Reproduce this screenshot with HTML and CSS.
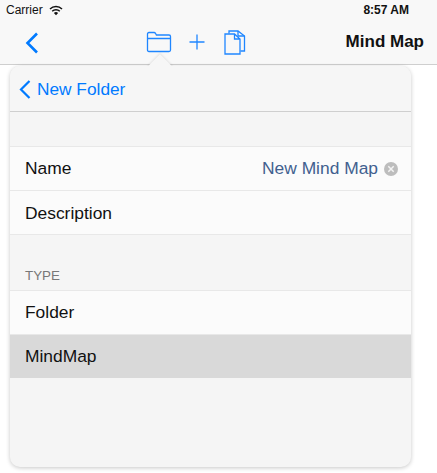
FILE: index.html
```html
<!DOCTYPE html>
<html>
<head>
    <title>Mind Map</title>
    <link rel="stylesheet" href="styles.css">
</head>
<body>
    <div class="topbar">
        <div class="status">
            <div class="carrier">
                Carrier
                <svg class="wifi" width="14" height="11" viewBox="0 0 14 11">
                    <path d="M1 4 A8.5 8.5 0 0 1 13 4" fill="none" stroke="#111" stroke-width="1.5"/>
                    <path d="M3.2 6.2 A5.4 5.4 0 0 1 10.8 6.2" fill="none" stroke="#111" stroke-width="1.5"/>
                    <path d="M7 10.2 L4.9 8 A3 3 0 0 1 9.1 8 Z" fill="#111"/>
                </svg>
            </div>
            <div class="clock">8:57 AM</div>
        </div>
        <div class="toolbar">
            <svg class="back" width="14" height="22" viewBox="0 0 14 22">
                <path d="M12 1.5 L2.5 11 L12 20.5" fill="none" stroke="#007aff" stroke-width="2.6"/>
            </svg>
            <div class="tools">
                <svg width="26" height="22" viewBox="0 0 26 22">
                    <path d="M1.5 19 V3 Q1.5 1.5 3 1.5 H8 Q9 1.5 9.6 2.5 L10.4 4 H23 Q24.5 4 24.5 5.5 V19 Q24.5 20.5 23 20.5 H3 Q1.5 20.5 1.5 19 Z M1.5 7.5 H24.5" fill="none" stroke="#1f86ff" stroke-width="1.3"/>
                </svg>
                <svg width="16" height="16" viewBox="0 0 16 16">
                    <path d="M8 .5 V15.5 M.5 8 H15.5" fill="none" stroke="#1f86ff" stroke-width="1.3"/>
                </svg>
                <svg class="copy" width="22" height="25" viewBox="0 0 22 25">
                    <path d="M5 3.5 V1 H14 L20.5 6 V21 H16.5" fill="none" stroke="#1f86ff" stroke-width="1.3"/>
                    <path d="M14 1 V6 H20.5" fill="none" stroke="#1f86ff" stroke-width="1.3"/>
                    <path d="M1 24 V4 H10.5 L16 9 V24 Z M10.5 4 V9 H16" fill="none" stroke="#1f86ff" stroke-width="1.3"/>
                </svg>
            </div>
            <div class="title">Mind Map</div>
        </div>
    </div>

    <div class="popover">
        <div class="arrow"></div>
        <div class="pop-nav">
            <svg width="12" height="19" viewBox="0 0 12 19">
                <path d="M10.5 1 L2 9.5 L10.5 18" fill="none" stroke="#007aff" stroke-width="2.2"/>
            </svg>
            New Folder
        </div>
        <div class="group first">
            <div class="row">
                <span>Name</span>
                <span class="value">New Mind Map</span>
                <svg class="clear" width="14" height="14" viewBox="0 0 14 14">
                    <circle cx="7" cy="7" r="7" fill="#bdbdbd"/>
                    <path d="M4.3 4.3 L9.7 9.7 M9.7 4.3 L4.3 9.7" stroke="#f4f4f4" stroke-width="1.5"/>
                </svg>
            </div>
            <div class="row low">Description</div>
        </div>
        <div class="group-label">TYPE</div>
        <div class="group">
            <div class="row">Folder</div>
            <div class="row selected">MindMap</div>
        </div>
    </div>
</body>
</html>
```

FILE: styles.css
```css
html, body {
    height: 100%;
}

body {
    margin: 0;
    font-family: "Liberation Sans", Arial, sans-serif;
    background: #fff;
    color: #111;
    overflow: hidden;
}

.topbar {
    height: 64px;
    background: #f8f8f8;
    border-bottom: 1px solid #cfcfcf;
}

.status {
    height: 20px;
    display: flex;
    justify-content: space-between;
    align-items: center;
    padding: 0 28px 0 6px;
    font-size: 12px;
}

.carrier {
    display: flex;
    align-items: center;
    gap: 6px;
}

.clock {
    font-weight: bold;
}

.toolbar {
    height: 44px;
    display: flex;
    align-items: center;
    padding: 0 13px 0 25px;
}

.back {
    margin-top: 2px;
}

.tools {
    margin-left: 107px;
    display: flex;
    align-items: center;
    gap: 17px;
}

.copy {
    margin-left: 2px;
}

.title {
    margin-left: auto;
    font-size: 17px;
    font-weight: bold;
}

.popover {
    position: relative;
    margin: 1px 0 0 10px;
    width: 401px;
    height: 401px;
    background: #f5f5f5;
    border-radius: 10px;
    box-shadow: 0 1px 4px rgba(0, 0, 0, 0.22);
}

.arrow {
    position: absolute;
    left: 141px;
    top: -8px;
    width: 18px;
    height: 18px;
    background: #f6f6f6;
    transform: rotate(45deg);
    box-shadow: -1px -1px 2px rgba(0, 0, 0, 0.08);
}

.pop-nav {
    position: relative;
    height: 43px;
    padding-top: 2px;
    display: flex;
    align-items: center;
    gap: 6px;
    padding-left: 9px;
    border-bottom: 1px solid #cfcfcf;
    color: #007aff;
    font-size: 17.3px;
    background: #f6f6f6;
    border-radius: 10px 10px 0 0;
}

.group {
    background: #fbfbfb;
    border-top: 1px solid #e8e8e8;
}

.group.first {
    margin-top: 34px;
}

.group-label {
    height: 55px;
    box-sizing: border-box;
    padding: 33px 0 0 15px;
    font-size: 13.4px;
    line-height: 16px;
    color: #777;
}

.row {
    height: 43px;
    display: flex;
    align-items: center;
    padding: 0 13px 0 15px;
    font-size: 17.4px;
    border-bottom: 1px solid #e8e8e8;
}

.row.low {
    padding-top: 1px;
    height: 42px;
}

.row.selected {
    height: 43px;
    background: #d9d9d9;
    border-bottom: none;
}

.value {
    margin-left: auto;
    color: #41608f;
}

.clear {
    margin-left: 6px;
}
```
